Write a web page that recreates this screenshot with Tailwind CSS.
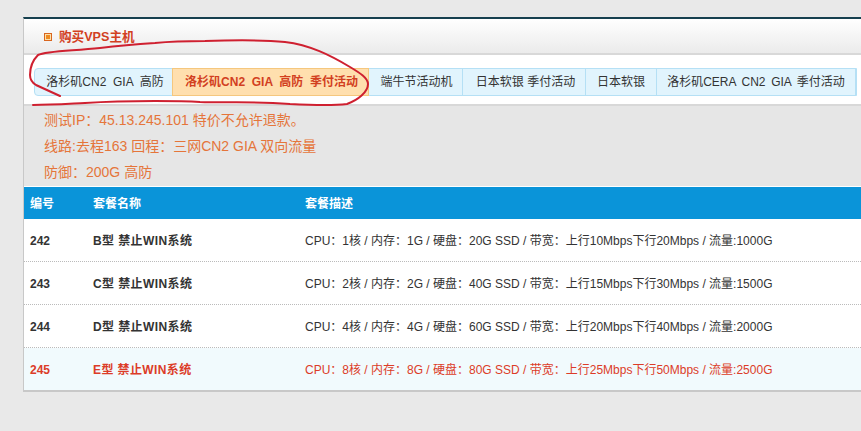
<!DOCTYPE html>
<html lang="en">
<head>
  <meta charset="UTF-8" />
  <title>购买VPS主机</title>
  <script src="https://cdn.jsdelivr.net/npm/@tailwindcss/browser@4"></script>
</head>
<body class="relative h-[431px] w-[861px] overflow-hidden bg-[#e9e9e9] pt-[17px] pl-[23px] font-['Liberation_Sans','Noto_Sans_CJK_SC',sans-serif] text-xs text-[#333]">
  <!-- Card -->
  <div class="h-[375px] w-[838px] border-b-2 border-l border-b-[#c8c8c8] border-l-[#c8c8c8] border-t-2 border-t-[#16404f] bg-white">
    <!-- Title -->
    <div class="flex h-[36px] items-center gap-[7px] border-b-2 border-[#d8d8d8] bg-gradient-to-b from-white to-[#ebebeb] pl-[20px] pt-[2px]">
      <span class="flex size-[8px] items-center justify-center border border-[#d9661f] bg-[#fbe0a8]">
        <span class="size-[4px] bg-[#ee8a22]"></span>
      </span>
      <h2 class="text-[12.6px] font-bold text-[#d2401f]">购买VPS主机</h2>
    </div>

    <!-- Tabs -->
    <div class="flex h-[51px] items-center border-b-2 border-[#d8d8d8] pl-[10px] pt-[4px]">
      <div class="flex h-[28px] items-center rounded-l border border-[#b5e0f5] bg-[#e1f4fd] text-[#333]">
        <span class="flex h-full w-[137px] items-center justify-center whitespace-nowrap pl-[3px] [word-spacing:3.3px]">洛杉矶CN2 GIA 高防</span>
        <span class="flex h-[28px] w-[197px] items-center justify-center whitespace-nowrap border border-[#f5c77e] bg-[#ffdfae] pl-[2px] font-bold text-[#d2401f] [word-spacing:3.3px]">洛杉矶CN2 GIA 高防 季付活动</span>
        <span class="flex h-full w-[94px] items-center justify-center whitespace-nowrap border-r border-[#b5e0f5] pl-[2px]">端牛节活动机</span>
        <span class="flex h-full w-[123px] items-center justify-center whitespace-nowrap border-r border-[#b5e0f5] pl-[3px]">日本软银 季付活动</span>
        <span class="flex h-full w-[71px] items-center justify-center whitespace-nowrap border-r border-[#b5e0f5]">日本软银</span>
        <span class="flex h-full w-[199px] items-center justify-center whitespace-nowrap border-r border-[#b5e0f5] [word-spacing:2.3px]">洛杉矶CERA CN2 GIA 季付活动</span>
      </div>
    </div>

    <!-- Notice -->
    <div class="h-[81px] border-b border-white bg-[#e6e6e6] pl-[20px] pt-[1px] text-sm leading-[26px] text-[#e5753a]">
      <p>测试IP：45.13.245.101 特价不允许退款。</p>
      <p>线路:去程163 回程：三网CN2 GIA 双向流量</p>
      <p>防御：200G 高防</p>
    </div>

    <!-- Table -->
    <div class="grid h-[32px] grid-cols-[63px_212px_1fr] items-center bg-[#0a94d9] pl-[6px] pt-[1px] font-bold text-white">
      <span>编号</span><span>套餐名称</span><span>套餐描述</span>
    </div>
    <div class="grid h-[43px] grid-cols-[63px_212px_1fr] items-center border-b border-dotted border-[#bbb] pl-[6px] pt-[1px]">
      <span class="font-bold">242</span><span class="font-bold tracking-[0.4px]">B型 禁止WIN系统</span><span>CPU：1核 / 内存：1G / 硬盘：20G SSD / 带宽：上行10Mbps下行20Mbps / 流量:1000G</span>
    </div>
    <div class="grid h-[43px] grid-cols-[63px_212px_1fr] items-center border-b border-dotted border-[#bbb] pl-[6px] pt-[1px]">
      <span class="font-bold">243</span><span class="font-bold tracking-[0.4px]">C型 禁止WIN系统</span><span>CPU：2核 / 内存：2G / 硬盘：40G SSD / 带宽：上行15Mbps下行30Mbps / 流量:1500G</span>
    </div>
    <div class="grid h-[43px] grid-cols-[63px_212px_1fr] items-center border-b border-dotted border-[#bbb] pl-[6px] pt-[1px]">
      <span class="font-bold">244</span><span class="font-bold tracking-[0.4px]">D型 禁止WIN系统</span><span>CPU：4核 / 内存：4G / 硬盘：60G SSD / 带宽：上行20Mbps下行40Mbps / 流量:2000G</span>
    </div>
    <div class="grid h-[42px] grid-cols-[63px_212px_1fr] items-center bg-[#f1fafd] pl-[6px] pt-[1px] text-[#dc3c28]">
      <span class="font-bold">245</span><span class="font-bold tracking-[0.4px]">E型 禁止WIN系统</span><span>CPU：8核 / 内存：8G / 硬盘：80G SSD / 带宽：上行25Mbps下行50Mbps / 流量:2500G</span>
    </div>
  </div>

  <!-- Red hand-drawn annotation over the tabs -->
  <svg class="absolute left-0 top-0" width="861" height="431" fill="none">
    <path d="M60 96 L36 85 C31 82 30 78 30 75 C30 67 33 60 38 55 C46 51 70 51 100 48 C125 45 140 44 155 43 C175 41 190 41 205 41 C235 40 265 40 285 42 C310 45 330 55 350 67 C360 73 368 78 368 84 C368 92 358 100 347 104 C330 106 310 105 290 104 C250 101 230 103 200 102 C185 101 170 101 155 101 C130 101 100 102 85 103 C65 104 50 105 33 105" stroke="#cf2030" stroke-width="2" stroke-linecap="round"/>
  </svg>
</body>
</html>
